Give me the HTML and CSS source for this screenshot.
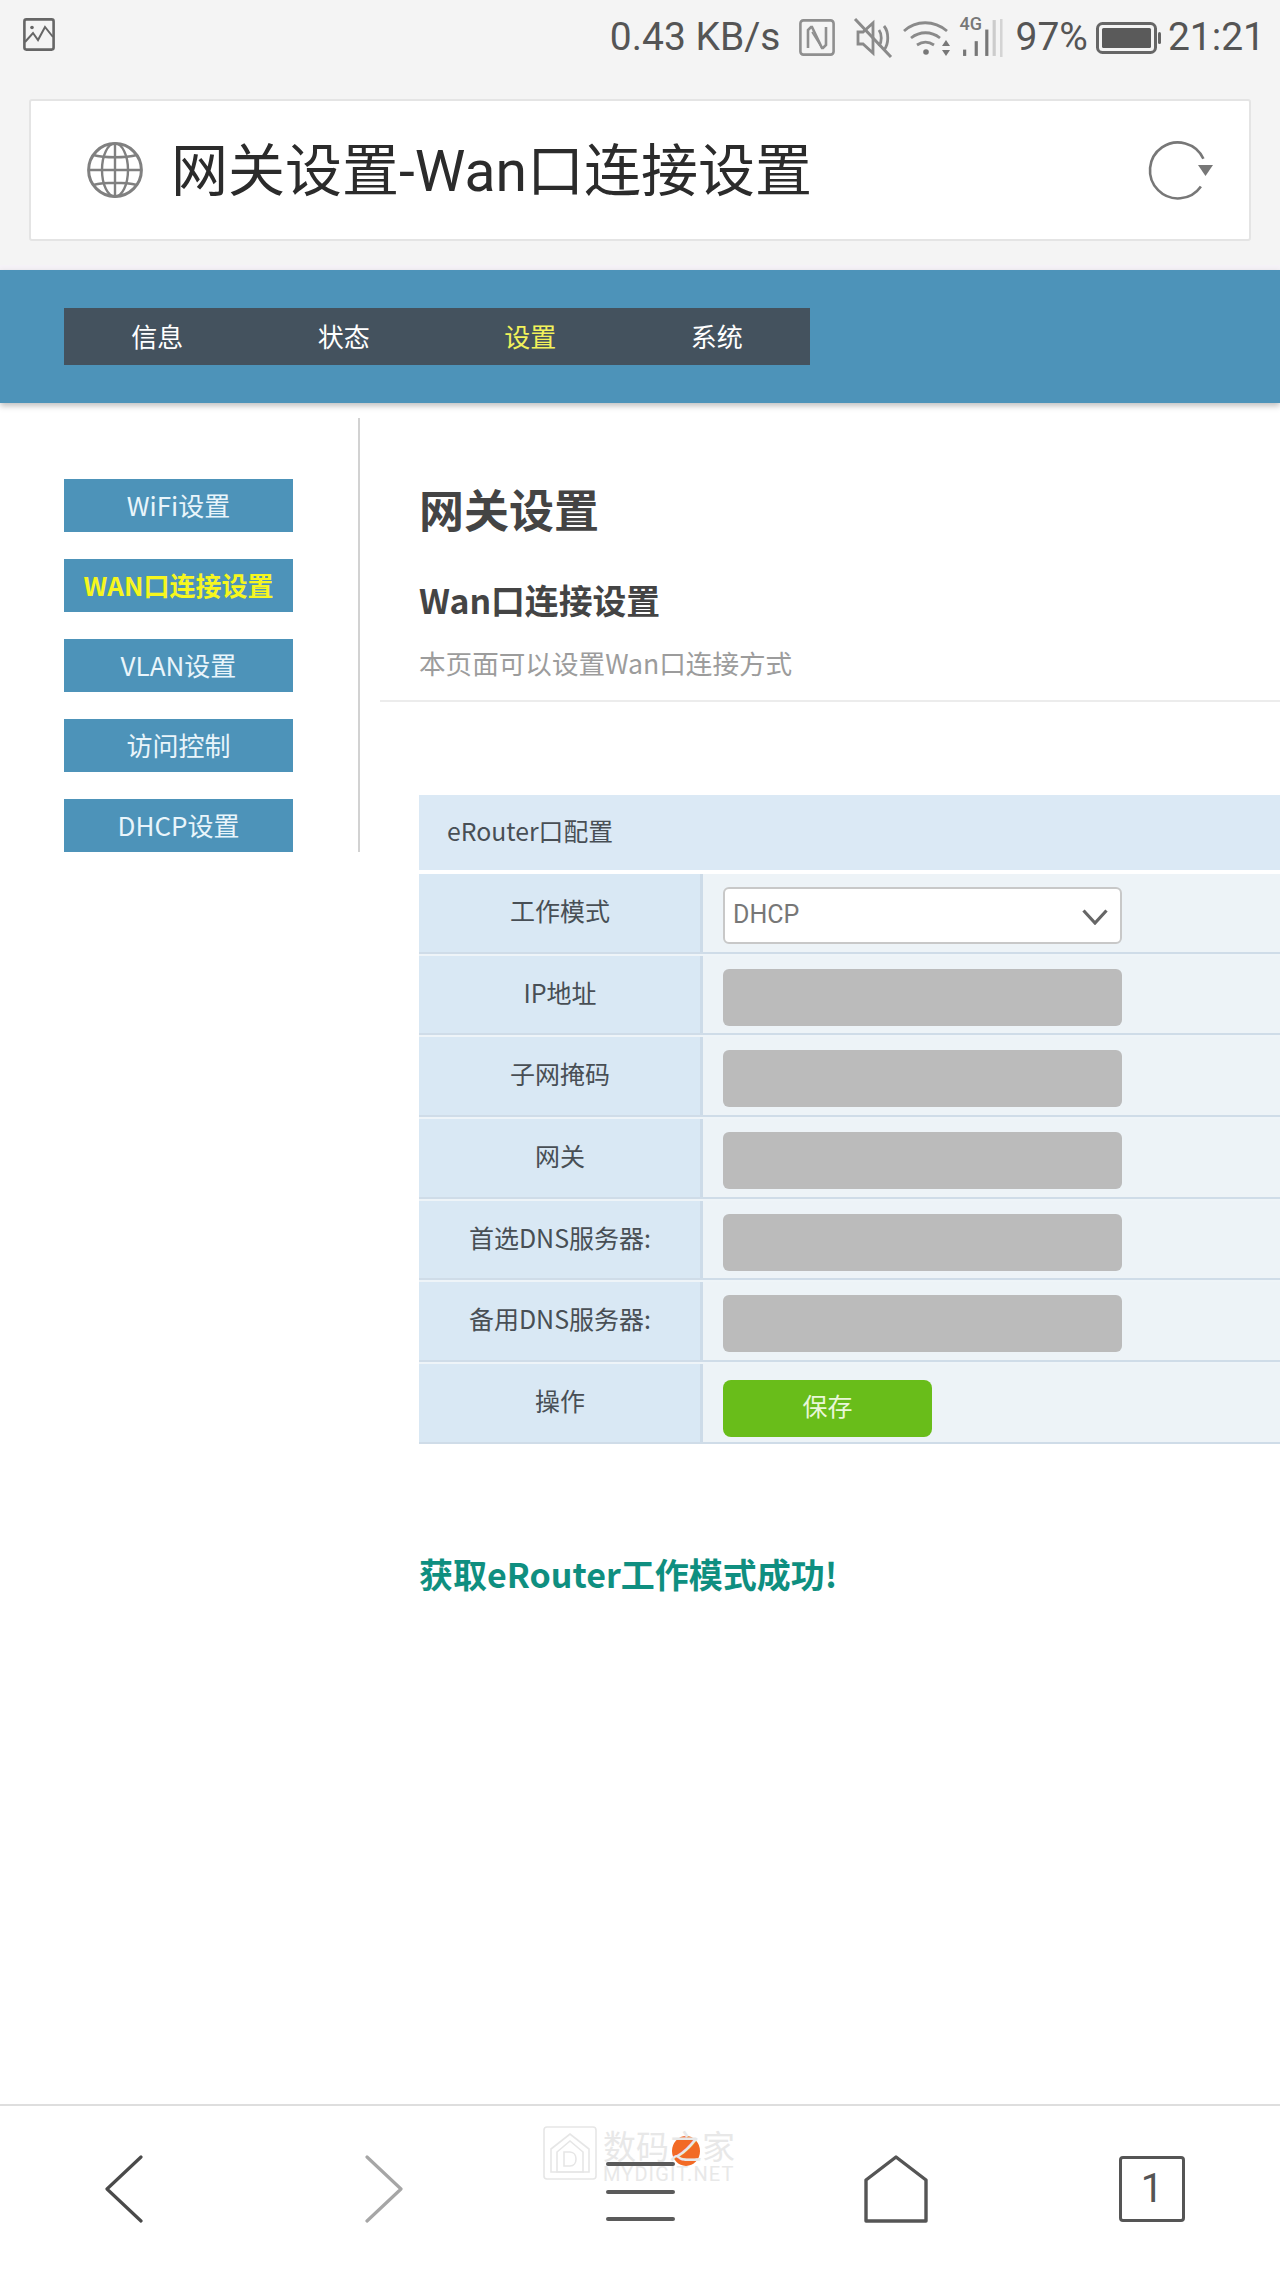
FILE: index.html
```html
<!DOCTYPE html>
<html lang="zh-CN">
<head>
<meta charset="utf-8">
<title>网关设置-Wan口连接设置</title>
<link rel="stylesheet" href="styles.css">
</head>
<body>
<div class="page">
  <header class="chrome">
    <div class="status">
      <svg class="ic-image" viewBox="0 0 32 33" fill="none" stroke="#666" stroke-width="2.6"><rect x="1.4" y="1.4" width="29.2" height="30.2" rx="2"/><path d="M2 24l8-9 5 7 7-13 8 10" stroke-width="2"/><circle cx="9" cy="9.5" r="1.8" fill="#666" stroke="none"/></svg>
      <span class="speed">0.43 KB/s</span>
      <svg class="ic-nfc" viewBox="0 0 36 37" fill="none" stroke="#8f8f8f" stroke-width="2.6"><rect x="1.4" y="1.4" width="33.2" height="34.2" rx="3"/><path d="M9 29V11l3-3h1l10 21h1l3-3V8"/><path d="M13 13l10 16" stroke-width="1.6"/></svg>
      <svg class="ic-mute" viewBox="0 0 40 40" fill="none" stroke="#8a8a8a" stroke-width="2.8"><path d="M5 14h5l10-9v30l-10-9H5z"/><path d="M26 12c3 4 3 12 0 16M31 8c5 6 5 18 0 24"/><path d="M2 1l36 38" stroke-width="3"/></svg>
      <svg class="ic-wifi" viewBox="0 0 48 36" fill="none" stroke="#8a8a8a" stroke-width="2.8"><path d="M1 11c12-11 30-11 43 0M8 18c9-7 20-7 29 0M14 25c6-4 11-4 17 0"/><circle cx="23" cy="32" r="2.8" fill="#777" stroke="none"/><path d="M43 20l-4 6h8zM43 36l-4-6h8z" fill="#777" stroke="none"/></svg>
      <span class="signal">
        <span class="tag-4g">4G</span>
        <svg class="ic-bars" viewBox="0 0 40 36" fill="#777"><rect x="3" y="29" width="3" height="6"/><rect x="14" y="21" width="3" height="14"/><rect x="24" y="10" width="3" height="25"/><rect x="31" y="1" width="3" height="34" fill="#ccc"/><rect x="38" y="0" width="2.4" height="36" fill="#d4d4d4"/></svg>
      </span>
      <span class="pct">97%</span>
      <svg class="ic-batt" viewBox="0 0 66 32" fill="none"><rect x="1.5" y="1.5" width="58" height="29" rx="5" stroke="#666" stroke-width="3"/><rect x="6" y="6" width="49" height="20" rx="1.5" fill="#5a5a5a"/><rect x="62" y="10" width="3" height="12" rx="1.5" fill="#666"/></svg>
      <span class="clock">21:21</span>
    </div>
    <div class="address">
      <svg class="ic-globe" viewBox="0 0 56 56" fill="none" stroke="#808080" stroke-width="2.4"><circle cx="28" cy="28" r="26.4" stroke-width="3"/><ellipse cx="28" cy="28" rx="13" ry="26.6"/><path d="M28 1v54M1.5 28h53M6 13c12 3 32 3 44 0M6 43c12-3 32-3 44 0"/></svg>
      <span class="url">网关设置-Wan口连接设置</span>
      <svg class="ic-reload" viewBox="0 0 66 60" fill="none" stroke="#777" stroke-width="2.6"><path d="M56.4 18.7A28 28 0 1 0 53.9 46.5"/><path d="M58.5 36L51 25H66z" fill="#777" stroke="none"/></svg>
    </div>
  </header>

  <nav class="topnav">
    <ul class="tabs">
      <li class="tab">信息</li>
      <li class="tab">状态</li>
      <li class="tab is-on">设置</li>
      <li class="tab">系统</li>
    </ul>
  </nav>

  <main class="body">
    <aside class="side">
      <a class="side-btn">WiFi设置</a>
      <a class="side-btn is-on">WAN口连接设置</a>
      <a class="side-btn">VLAN设置</a>
      <a class="side-btn">访问控制</a>
      <a class="side-btn">DHCP设置</a>
    </aside>
    <section class="content">
      <h1 class="h1">网关设置</h1>
      <h2 class="h2">Wan口连接设置</h2>
      <p class="sub">本页面可以设置Wan口连接方式</p>
      <hr class="rule">
      <div class="form">
        <div class="form-head">eRouter口配置</div>
        <div class="row">
          <div class="label">工作模式</div>
          <div class="value">
            <div class="select">DHCP
              <svg class="ic-caret" viewBox="0 0 26 16" fill="none" stroke="#666" stroke-width="3.2"><path d="M1.5 1.5L13 14 24.5 1.5"/></svg>
            </div>
          </div>
        </div>
        <div class="row"><div class="label">IP地址</div><div class="value"><input class="field" disabled></div></div>
        <div class="row"><div class="label">子网掩码</div><div class="value"><input class="field" disabled></div></div>
        <div class="row"><div class="label">网关</div><div class="value"><input class="field" disabled></div></div>
        <div class="row"><div class="label">首选DNS服务器:</div><div class="value"><input class="field" disabled></div></div>
        <div class="row"><div class="label">备用DNS服务器:</div><div class="value"><input class="field" disabled></div></div>
        <div class="row row-last"><div class="label">操作</div><div class="value"><button class="save">保存</button></div></div>
      </div>
      <p class="msg">获取eRouter工作模式成功!</p>
    </section>
  </main>

  <footer class="toolbar">
    <svg class="tb-back" viewBox="0 0 38 68" fill="none" stroke="#4a4a4a" stroke-width="3.2" stroke-linecap="round" stroke-linejoin="round"><path d="M36 2L2 34l34 32"/></svg>
    <svg class="tb-fwd" viewBox="0 0 38 68" fill="none" stroke="#a6a6a6" stroke-width="3.2" stroke-linecap="round" stroke-linejoin="round"><path d="M2 2l34 32L2 66"/></svg>
    <div class="tb-menu"><span class="bar"></span><span class="bar"></span><span class="bar"></span></div>
    <svg class="tb-home" viewBox="0 0 64 68" fill="none" stroke="#555" stroke-width="3.4" stroke-linejoin="round"><path d="M2 25L32 2l30 23v41H2z"/></svg>
    <div class="tb-tabs">1</div>

    <div class="mark">
      <svg class="mark-logo" viewBox="0 0 54 54" fill="none" stroke="#e6e6e6" stroke-width="1.6"><rect x="1" y="1" width="52" height="52" rx="3"/><path d="M8 46V23L27 8l19 15v23z"/><path d="M14 46V26L27 15l13 11v20z"/><path d="M21 26v14h6c8 0 8-14 0-14z"/></svg>
      <span class="mark-dot"></span>
      <div class="mark-text">
        <span class="mark-cn">数码之家</span>
        <span class="mark-en">MYDIGIT.NET</span>
      </div>
    </div>
  </footer>
</div>
</body>
</html>
```

FILE: styles.css
```css
* { box-sizing: border-box; }
html, body { margin: 0; padding: 0; background: #fff; }
body { font-family: "Noto Sans CJK SC", "Noto Sans", sans-serif; }
.page { width: 1280px; height: 2275px; display: flex; flex-direction: column; overflow: hidden; }

/* browser chrome */
.chrome { height: 270px; background: #f4f4f4; border-bottom: 5px solid #f5f2f7; flex: none; }
.status { height: 99px; padding: 0 15px 24px 23px; display: flex; align-items: center; color: #555; font: 39px/1 Roboto, sans-serif; }
.ic-image { width: 32px; height: 33px; margin-right: auto; margin-top: -6px; }
.speed { margin-right: 19px; }
.ic-nfc { width: 36px; height: 37px; margin-right: 18px; }
.ic-mute { width: 40px; height: 40px; margin-right: 10px; }
.ic-wifi { width: 48px; height: 36px; margin-right: 8px; }
.signal { position: relative; width: 44px; height: 38px; margin-right: 12px; }
.tag-4g { position: absolute; left: 0; top: -4px; font: 500 18px/18px Roboto, sans-serif; color: #777; }
.ic-bars { display: block; width: 44px; height: 38px; }
.pct { margin-right: 8px; }
.ic-batt { width: 66px; height: 32px; margin-right: 6px; }
.address { height: 142px; margin: 0 29px; background: #fff; border: 2px solid #e4e4e4; border-radius: 3px; display: flex; align-items: center; padding: 0 36px 0 56px; }
.ic-globe { width: 56px; height: 56px; flex: none; margin-right: 30px; }
.url { font: 400 57px/1.2 Roboto, "Noto Sans CJK SC", sans-serif; color: #2b2b2b; flex: 1; padding-top: 4px; margin-left: -2px; }
.ic-reload { width: 66px; height: 60px; flex: none; overflow: visible; }

/* blue navigation */
.topnav { height: 133px; flex: none; background: #4d93b9; padding: 38px 0 0 64px; box-shadow: 0 3px 6px rgba(0,0,0,.25); position: relative; }
.tabs { list-style: none; margin: 0; padding: 0; width: 746px; height: 57px; background: #44525e; display: grid; grid-template-columns: repeat(4, 1fr); }
.tab { color: #fff; font-size: 26px; line-height: 55px; text-align: center; }
.tab.is-on { color: #f2f25a; }

/* main */
.body { flex: 1; display: flex; align-items: flex-start; }
.side { width: 360px; flex: none; margin-top: 15px; padding: 61px 0 0 64px; border-right: 2px solid #d2d2d2; display: flex; flex-direction: column; gap: 27px; }
.side-btn { display: block; width: 229px; height: 53px; background: #4d93b9; color: #e9f5fb; font-size: 26px; line-height: 51px; text-align: center; white-space: nowrap; }
.side-btn.is-on { color: #f6f61e; font-weight: 700; }
.content { flex: 1; min-width: 0; padding-left: 59px; }
.h1 { margin: 76px 0 0; font-size: 45px; line-height: 60px; font-weight: 700; color: #444; }
.h2 { margin: 39px 0 0; font-size: 33.8px; line-height: 44px; font-weight: 700; color: #444; }
.sub { margin: 23px 0 0; font-size: 26.6px; line-height: 36px; font-weight: 400; color: #9c9c9c; }
.rule { margin: 19px 0 0 -39px; border: 0; height: 2px; background: #ececec; }
.form { margin-top: 93px; color: #484f55; font-size: 25px; }
.form-head { height: 75px; background: #dbe9f5; padding-left: 28px; line-height: 70px; margin-bottom: 4px; font-size: 24.8px; }
.row { display: grid; grid-template-columns: 284px 1fr; height: 77.67px; margin-bottom: 4px; box-shadow: 0 2px 0 #cfdce8, 0 4px 0 #eef4f8; }
.row-last { margin-bottom: 0; box-shadow: 0 2px 0 #cfdce8; }
.label { background: #d9e8f4; border-right: 3px solid #cddbe8; text-align: center; line-height: 72px; white-space: nowrap; padding-left: 1px; }
.value { background: #edf3f7; padding: 13px 0 0 20px; }
.select { position: relative; width: 399px; height: 57px; background: #fff; border: 2px solid #c8c8c8; border-radius: 6px; color: #777; font: 25px/51px Roboto, "Noto Sans", sans-serif; padding-left: 8px; }
.ic-caret { position: absolute; right: 12px; top: 20px; width: 26px; height: 16px; }
.field { display: block; width: 399px; height: 57px; background: #bbb; border: 0; border-radius: 6px; padding: 0; }
.save { display: block; width: 209px; height: 57px; margin-top: 3px; background: #69bd1a; color: #e9f7d8; border: 0; border-radius: 8px; font: 25px/50px "Noto Sans CJK SC", sans-serif; padding: 0 0 10px; }
.msg { margin: 109px 0 0; font-size: 34px; line-height: 46px; font-weight: 700; color: #0f8f80; }

/* bottom toolbar */
.toolbar { position: relative; height: 171px; flex: none; background: #fff; border-top: 2px solid #dedede; display: flex; align-items: flex-start; padding-top: 49px; }
.tb-back { width: 38px; height: 68px; margin-left: 105px; }
.tb-fwd { width: 38px; height: 68px; margin-left: 222px; }
.tb-menu { width: 69px; height: 59px; margin: 7px 0 0 203px; display: flex; flex-direction: column; justify-content: space-between; }
.bar { display: block; height: 4px; background: #5a5a5a; border-radius: 2px; }
.tb-home { width: 64px; height: 68px; margin-left: 189px; }
.tb-tabs { width: 66px; height: 66px; margin: 1px 0 0 191px; border: 3.4px solid #555; border-radius: 4px; color: #555; font: 40px/60px Roboto, sans-serif; text-align: center; }

/* watermark overlay */
.mark { position: absolute; left: 543px; top: 20px; width: 200px; height: 60px; display: flex; gap: 6px; }
.mark-logo { width: 54px; height: 54px; flex: none; }
.mark-text { position: relative; display: flex; flex-direction: column; width: 134px; }
.mark-cn { font-size: 33px; line-height: 38px; color: #e8e8e8; white-space: nowrap; }
.mark-en { font: 20px/20px Roboto, sans-serif; color: #e8e8e8; letter-spacing: 1.1px; white-space: nowrap; }
.mark-dot { position: absolute; left: 129px; top: 10px; width: 28px; height: 30px; border-radius: 50%; background: #f26a25; }
```
